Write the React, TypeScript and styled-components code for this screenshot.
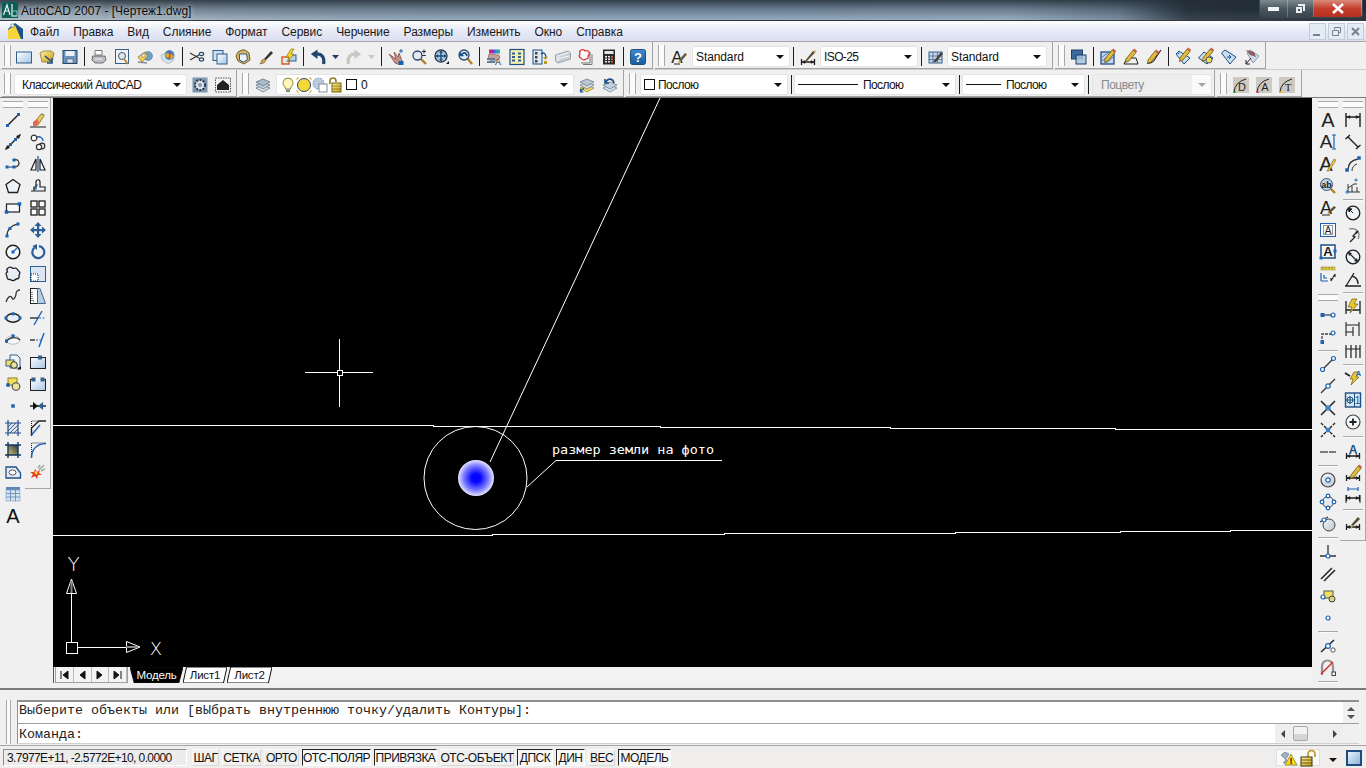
import React from "react";
import styled, { createGlobalStyle } from "styled-components";

const BLUE = "#1b62b4";
const INK = "#1f1f1f";
const UI_FONT = '"Liberation Sans", Arial, sans-serif';

const GlobalStyle = createGlobalStyle`
  html, body { margin: 0; padding: 0; background: #f0f0f0; overflow: hidden; }
  #root { width: 1366px; height: 768px; }
  * { box-sizing: border-box; }
`;

const Frame = styled.div`
  width: 1366px;
  height: 768px;
  display: flex;
  flex-direction: column;
  background: #f0f0f0;
  font-family: ${UI_FONT};
  font-size: 12px;
  color: #111;
`;

/* title bar */
const TitleBar = styled.header`
  height: 21px;
  display: flex;
  align-items: center;
  padding: 0 2px;
  border-bottom: 1px solid #30383f;
  background:
    linear-gradient(180deg, rgba(35, 45, 55, 0.85) 0, rgba(35, 45, 55, 0.35) 45%, rgba(255, 255, 255, 0.08) 100%),
    linear-gradient(90deg, #a9b8c4 0, #8fa5b8 25%, #8aa2bb 50%, #90a6bc 74%, #6f8498 82%, #26323d 87%, #1c2833 100%);
`;

const TitleText = styled.span`
  margin-left: 3px;
  padding-top: 1px;
  font-size: 12px;
  color: #0c0c0c;
  text-shadow: 0 0 5px rgba(255, 255, 255, 0.8);
`;

const WindowButtons = styled.div`
  margin-left: auto;
  margin-right: 1px;
  align-self: flex-start;
  display: flex;
  height: 18px;
  border: 1px solid #3b4650;
  border-top: none;
  border-radius: 0 0 4px 4px;
  overflow: hidden;
`;

const WinButton = styled.div<{ $w: number; $close?: boolean }>`
  width: ${(p) => p.$w}px;
  display: flex;
  align-items: center;
  justify-content: center;
  border-right: 1px solid rgba(255, 255, 255, 0.25);
  background: ${(p) =>
    p.$close
      ? "linear-gradient(180deg, #d98a7a 0, #c4402c 50%, #b52f1e 100%)"
      : "linear-gradient(180deg, #7d8890 0, #4d5962 50%, #39444d 100%)"};
`;

/* menu */
const MenuBar = styled.nav`
  height: 21px;
  display: flex;
  align-items: center;
  padding-left: 8px;
  border-bottom: 1px solid #a8a8a8;
  background: linear-gradient(180deg, #ffffff 0, #e9ebf6 45%, #dadff1 100%);
`;

const MenuList = styled.div`
  display: flex;
  padding-top: 1px;
`;

const MenuItem = styled.span`
  padding: 0 7px;
  font-size: 12px;
  color: #1a1a1a;
  letter-spacing: -0.07px;
`;

const DocIcon = styled.div`
  width: 15px;
  height: 16px;
`;

const MdiButtons = styled.div`
  margin-left: auto;
  margin-right: 2px;
  display: flex;
  gap: 2px;
`;

const MdiButton = styled.div`
  width: 17px;
  height: 17px;
  display: flex;
  align-items: center;
  justify-content: center;
  background: #e3ebf5;
  border: 1px solid #c4ccd8;
`;

/* toolbars */
const ToolRow = styled.div`
  height: 28px;
  display: flex;
  gap: 2px;
  padding-left: 2px;
  border-bottom: 1px solid #cfcfcf;
  &:last-of-type {
    border-bottom-color: #7c7c7c;
  }
`;

const Toolbar = styled.div<{ $w: number }>`
  width: ${(p) => p.$w}px;
  padding-top: 3px;
  display: flex;
  align-items: center;
  border-right: 1px solid #a3a3a3;
  border-bottom: 1px solid #a3a3a3;
  background: #f0f0f0;
`;

const Grip = styled.span<{ $w?: number }>`
  flex: none;
  width: ${(p) => p.$w ?? 12}px;
  height: 100%;
  display: flex;
  justify-content: center;
  padding-bottom: 2px;
  &::before {
    content: "";
    width: 5px;
    border-left: 1px solid #a9a9a9;
    border-right: 1px solid #a9a9a9;
    background: #fbfbfb;
  }
`;

const Cell = styled.span<{ $w?: number; $ml?: number }>`
  flex: none;
  width: ${(p) => p.$w ?? 23}px;
  height: 22px;
  margin-left: ${(p) => p.$ml ?? 0}px;
  display: flex;
  align-items: center;
  padding-left: ${(p) => (p.$w ? 3 : 4)}px;
`;

const Sep = styled.span`
  flex: none;
  width: 6px;
  height: 19px;
  display: flex;
  justify-content: center;
  &::before {
    content: "";
    width: 1px;
    background: #1d1d1d;
  }
`;

const Combo = styled.div<{ $w: number; $ml?: number; $off?: boolean; $gap?: number }>`
  flex: none;
  width: ${(p) => p.$w}px;
  height: 21px;
  margin-left: ${(p) => p.$ml ?? 0}px;
  display: flex;
  align-items: center;
  padding: 0 5px 0 3px;
  gap: ${(p) => p.$gap ?? 3}px;
  background: ${(p) => (p.$off ? "linear-gradient(90deg, #eeeeee 84%, #fafafa 84%)" : "#ffffff")};
  border: 1px solid #e4e4e4;
  border-radius: 2px;
  font-size: 12px;
  color: ${(p) => (p.$off ? "#8b8b8b" : "#111")};
  &::after {
    content: "";
    margin-left: auto;
    border-left: 4px solid transparent;
    border-right: 4px solid transparent;
    border-top: 4px solid ${(p) => (p.$off ? "#a5a5a5" : "#111")};
  }
`;

const Swatch = styled.span`
  flex: none;
  width: 11px;
  height: 11px;
  border: 1px solid #111;
  background: #fff;
`;

const LayerSwatch = styled(Swatch)`
  margin: 0 4px 0 2px;
`;

const LineSample = styled.span<{ $w: number }>`
  flex: none;
  width: ${(p) => p.$w}px;
  height: 1px;
  margin-right: 2px;
  background: #111;
`;

const ComboLabel = styled.span<{ $ml?: number; $ls?: number }>`
  margin-left: ${(p) => p.$ml ?? 0}px;
  letter-spacing: ${(p) => p.$ls ?? -0.1}px;
  white-space: nowrap;
`;

/* workspace */
const Workspace = styled.main`
  height: 585px;
  display: flex;
`;

const Dock = styled.aside<{ $w: number; $pl: number }>`
  flex: none;
  width: ${(p) => p.$w}px;
  padding-left: ${(p) => p.$pl}px;
  display: flex;
  align-items: flex-start;
`;

const ToolColumn = styled.div<{ $w: number; $edge?: boolean; $pb?: number }>`
  width: ${(p) => p.$w}px;
  display: flex;
  flex-direction: column;
  align-items: center;
  padding-bottom: ${(p) => p.$pb ?? 0}px;
  border-right: ${(p) => (p.$edge ? "1px solid #a8a8a8" : "none")};
  border-bottom: ${(p) => (p.$edge ? "1px solid #a8a8a8" : "none")};
`;

const VGrip = styled.span`
  flex: none;
  height: 11px;
  width: 20px;
  padding-top: 3px;
  &::before {
    content: "";
    display: block;
    height: 5px;
    border-top: 1px solid #a9a9a9;
    border-bottom: 1px solid #a9a9a9;
    background: #fbfbfb;
  }
`;

const VBreak = styled.span<{ $h: number; $grip?: boolean }>`
  flex: none;
  width: 20px;
  height: ${(p) => p.$h}px;
  display: flex;
  flex-direction: column;
  justify-content: ${(p) => (p.$grip ? "flex-end" : "center")};
  padding-bottom: ${(p) => (p.$grip ? 3 : 0)}px;
  &::before {
    content: "";
    display: block;
    height: ${(p) => (p.$grip ? 5 : 1)}px;
    border-top: 1px solid #a9a9a9;
    border-bottom: ${(p) => (p.$grip ? "1px solid #a9a9a9" : "none")};
    background: #fbfbfb;
  }
`;

const VCell = styled.span`
  flex: none;
  height: 22px;
  display: flex;
  align-items: center;
  justify-content: center;
`;

const Center = styled.section`
  flex: none;
  width: 1259px;
  display: flex;
  flex-direction: column;
`;

const Canvas = styled.svg`
  display: block;
  width: 1259px;
  height: 569px;
  background: #000;
`;

const TabBar = styled.div`
  height: 16px;
  display: flex;
  align-items: stretch;
  padding-left: 1px;
  background: #f3f3f3;
  border-left: 1px solid #555;
`;

const TabNav = styled.div`
  display: flex;
  width: 73px;
  margin-right: 2px;
  border: 1px solid #a0a0a0;
  border-top: none;
`;

const TabNavCell = styled.span`
  flex: 1;
  display: flex;
  align-items: center;
  justify-content: center;
  border-right: 1px solid #bdbdbd;
  background: #f4f4f4;
`;

const Tab = styled.div<{ $w: number; $on?: boolean }>`
  position: relative;
  width: ${(p) => p.$w}px;
  padding-bottom: 1px;
  display: flex;
  align-items: center;
  justify-content: center;
  font-size: 11.5px;
  letter-spacing: -0.2px;
  color: ${(p) => (p.$on ? "#fff" : "#111")};
  & span {
    position: relative;
  }
  & svg {
    position: absolute;
    inset: 0;
    width: 100%;
    height: 100%;
  }
`;

/* command line */
const CommandPanel = styled.section`
  height: 57px;
  margin-top: 5px;
  padding-top: 10px;
  display: flex;
  border-top: 2px solid #7b7b7b;
`;

const CommandGrip = styled.span`
  flex: none;
  width: 5px;
  margin: 0 6px;
  border-left: 1px solid #a9a9a9;
  border-right: 1px solid #a9a9a9;
  background: #fbfbfb;
  height: 44px;
`;

const CommandBody = styled.div`
  width: 1342px;
  display: flex;
  flex-direction: column;
  font-family: "Liberation Mono", "Courier New", monospace;
  font-size: 13.33px;
  color: #222;
`;

const HistoryRow = styled.div`
  height: 24px;
  display: flex;
  border-top: 2px solid #8f8f8f;
  border-bottom: 1px solid #a0a0a0;
  border-left: 1px solid #8f8f8f;
  background: #fff;
`;

const InputRow = styled.div`
  height: 20px;
  display: flex;
  align-items: center;
  border-left: 1px solid #8f8f8f;
  border-bottom: 1px solid #d0d0d0;
`;

const CommandText = styled.div<{ $pt?: number; $pb?: number }>`
  flex: 1;
  height: 100%;
  padding: ${(p) => p.$pt ?? 0}px 0 ${(p) => p.$pb ?? 0}px 1px;
  display: flex;
  align-items: center;
  background: #fff;
`;

const VScroll = styled.div`
  flex: none;
  width: 16px;
  display: flex;
  flex-direction: column;
  align-items: center;
  justify-content: space-between;
  padding: 5px 0 4px;
  background: #f0f0f0;
`;

const HScroll = styled.div`
  flex: none;
  width: 68px;
  height: 17px;
  margin-right: 16px;
  padding: 0 6px;
  display: flex;
  align-items: center;
  background: #eeeeee;
`;

const Thumb = styled.span`
  width: 15px;
  height: 15px;
  margin-left: 8px;
  margin-right: auto;
  border: 1px solid #a8a8a8;
  border-radius: 2px;
  background: linear-gradient(180deg, #f2f2f2 50%, #d5d5d5 50%);
`;

const TriangleUp = styled.span`
  border-left: 4px solid transparent;
  border-right: 4px solid transparent;
  border-bottom: 4px solid #555;
`;
const TriangleDown = styled.span`
  border-left: 4px solid transparent;
  border-right: 4px solid transparent;
  border-top: 4px solid #555;
`;
const TriangleLeft = styled.span`
  border-top: 4px solid transparent;
  border-bottom: 4px solid transparent;
  border-right: 4px solid #444;
`;
const TriangleRight = styled.span`
  border-top: 4px solid transparent;
  border-bottom: 4px solid transparent;
  border-left: 4px solid #444;
`;

/* status bar */
const StatusBar = styled.footer`
  height: 23px;
  display: flex;
  align-items: flex-start;
  padding: 3px 0 0 3px;
  border-top: 1px solid #a4a4a4;
  background: #f0eded;
`;

const Coords = styled.div`
  flex: none;
  width: 184px;
  height: 17px;
  margin-right: 5px;
  padding: 1px 0 0 3px;
  display: flex;
  align-items: center;
  font-size: 12px;
  letter-spacing: -0.6px;
  white-space: nowrap;
  border: 1px solid;
  border-color: #8f8f8f #fff #fff #8f8f8f;
  background: #ececec;
`;

const StatusButton = styled.div<{ $w: number; $on?: boolean }>`
  flex: none;
  width: ${(p) => p.$w}px;
  height: 17px;
  margin-right: 3px;
  padding-top: 1px;
  display: flex;
  align-items: center;
  justify-content: center;
  font-size: 12px;
  letter-spacing: -0.5px;
  white-space: nowrap;
  background: ${(p) => (p.$on ? "#f7f7f7" : "#f0f0f0")};
  border: 1px solid;
  border-color: ${(p) => (p.$on ? "#222 #fff #fff #222" : "#fbfbfb #d8d8d8 #d8d8d8 #fbfbfb")};
`;

const Tray = styled.div`
  margin-left: auto;
  display: flex;
  align-items: center;
  height: 17px;
  padding-right: 4px;
`;

const TrayIcons = styled.div`
  width: 44px;
  height: 17px;
  padding: 0 3px;
  display: flex;
  align-items: center;
  justify-content: space-between;
  background: #f9f9f9;
  border: 1px solid #e0e0e0;
`;

const TrayArrow = styled.span`
  margin: 4px 9px 0;
  border-left: 4px solid transparent;
  border-right: 4px solid transparent;
  border-top: 4px solid #111;
`;

const CleanScreen = styled.span`
  width: 16px;
  height: 16px;
  border: 2px solid #1e4d7c;
  background: linear-gradient(135deg, #e8f2fa 0, #8db4d8 100%);
`;

/* ---- icons ---- */
const Dot = ({ x, y, s = 3, c = BLUE }: { x: number; y: number; s?: number; c?: string }) => (
  <rect x={x - s / 2} y={y - s / 2} width={s} height={s} fill={c} />
);
const Ring = ({ x, y, r = 1.8 }: { x: number; y: number; r?: number }) => (
  <circle cx={x} cy={y} r={r} fill="#fff" stroke={BLUE} strokeWidth="1.2" />
);
const Glyph = ({ x = 8, y = 14, size = 17, c = INK, t = "A", w = 400 }: { x?: number; y?: number; size?: number; c?: string; t?: string; w?: number }) => (
  <text x={x} y={y} fontSize={size} fontWeight={w} textAnchor="middle" fontFamily={UI_FONT} fill={c}>
    {t}
  </text>
);
const Pencil = ({ x = 0, y = 0, c = "#e2b93a" }: { x?: number; y?: number; c?: string }) => (
  <g transform={`translate(${x} ${y})`}>
    <path d="M4 11 L11 2 L14 4.5 L7 13 L3.5 14.5 Z" fill={c} stroke="#5a4a10" strokeWidth="0.7" />
    <path d="M11 2 L12.2 .6 L15.2 3 L14 4.5 Z" fill="#d0574f" />
  </g>
);
const Lens = ({ x = 6.5, y = 6.5, r = 4.5, fill = "#dfeaf5" }: { x?: number; y?: number; r?: number; fill?: string }) => (
  <g>
    <path d={`M${x + r * 0.7} ${y + r * 0.7} L15 15`} stroke="#b5802c" strokeWidth="2.4" />
    <circle cx={x} cy={y} r={r} fill={fill} stroke="#2d4a6b" strokeWidth="1.3" />
  </g>
);
const DimBar = ({ y = 12 }: { y?: number }) => (
  <g stroke={INK} strokeWidth="1.3">
    <path d={`M1 ${y} H15 M1.5 ${y - 3} V${y + 3} M14.5 ${y - 3} V${y + 3}`} />
    <path d={`M2 ${y} L5 ${y - 1.5} V${y + 1.5} Z M14 ${y} L11 ${y - 1.5} V${y + 1.5} Z`} fill={INK} strokeWidth="0.4" />
  </g>
);

const icons: Record<string, React.ReactNode> = {
  /* standard */
  new: <rect x="0.5" y="3" width="15" height="11" fill="url(#gSheet)" stroke="#2d5f8f" />,
  open: (
    <g>
      <path d="M1 4 L5 2 H12 L15 4 L13 13 H3 Z" fill="url(#gGold)" stroke="#8a7440" strokeWidth="0.8" />
      <path d="M6 7 L13 13 M13 9 V14 H8" stroke="#1c4f86" strokeWidth="1.5" fill="none" />
    </g>
  ),
  save: (
    <g>
      <rect x="1" y="1.5" width="14" height="13" fill="#6d93bd" stroke="#22476f" />
      <rect x="3.5" y="2" width="9" height="5" fill="#e9f0f7" />
      <rect x="5" y="10" width="6" height="4" fill="#e0e4ea" stroke="#22476f" strokeWidth="0.5" />
    </g>
  ),
  plot: (
    <g stroke="#555" strokeWidth="0.8">
      <path d="M4 1.5 H11 V6 H4 Z" fill="#fff" />
      <path d="M1.5 7 H14 L15 11 L12 14 H4 L1 11 Z" fill="#bcbcc4" />
      <path d="M4 10 H11" stroke="#fff" />
    </g>
  ),
  preview: (
    <g>
      <rect x="1.5" y="0.5" width="13" height="14" fill="#eef4fa" stroke="#33608e" />
      <circle cx="8" cy="7" r="3.5" fill="#dbe8f4" stroke="#555" />
      <path d="M10 10 L14 15" stroke="#c08a33" strokeWidth="2" />
    </g>
  ),
  publish: (
    <g>
      <circle cx="11" cy="7" r="4.5" fill="#6f9ecb" stroke="#4a6785" strokeWidth="0.5" />
      <path d="M1 8 L8 3 L11 7 L5 13 Z" fill="#f4d34a" stroke="#7a6a22" strokeWidth="0.7" />
      <rect x="5" y="5" width="3" height="3" fill="#fff" stroke="#555" strokeWidth="0.5" />
      <path d="M1 13 L10 14" stroke="#8a8a8a" strokeWidth="1.4" />
    </g>
  ),
  dwf: (
    <g>
      <path d="M1 6 L8 3 L14 6 V11 L8 15 L2 11 Z" fill="#d6e1ec" stroke="#9aa9b8" strokeWidth="0.6" />
      <circle cx="9.5" cy="6" r="4.8" fill="#3f82c8" />
      <path d="M5 5 Q9 3 14 7 L11 10 Q7 8 6 8 Z" fill="#e7a92c" />
      <path d="M9 1.5 Q11 5 9 10" stroke="#c73f3a" strokeWidth="1.3" fill="none" />
    </g>
  ),
  cut: (
    <g fill="none" stroke="#333" strokeWidth="1.1">
      <path d="M1 4 L10 9 M1 11 L10 6" />
      <ellipse cx="12.5" cy="5" rx="2.2" ry="1.6" stroke="#22476f" />
      <ellipse cx="12.5" cy="10.5" rx="2.2" ry="1.6" stroke="#22476f" />
    </g>
  ),
  copy: (
    <g stroke="#2d5f8f">
      <rect x="1" y="1.5" width="10" height="10" fill="#cfe0f0" />
      <rect x="5" y="5" width="10" height="10" fill="url(#gSheet)" />
    </g>
  ),
  paste: (
    <g>
      <path d="M3 3 L7 1 H10 L14 4 L15 11 L9 15 L3 12 L1 7 Z" fill="#d8b86a" stroke="#6b5a2a" />
      <path d="M4.5 5 H11.5 L12.5 10.5 L8.5 13 L4.5 11 Z" fill="#eef3f8" stroke="#2d5f8f" />
    </g>
  ),
  brush: (
    <g>
      <path d="M6 10 L13 2 L15 4 L8 11 Z" fill="#39342c" />
      <path d="M6 10 L8 11 L6 14 L2 15 L4 11 Z" fill="#e0a23c" stroke="#444" strokeWidth="0.5" />
    </g>
  ),
  match: (
    <g>
      <rect x="1" y="8" width="7" height="7" fill="#e7e7e7" stroke="#d95a24" strokeWidth="1.4" />
      <rect x="8" y="6" width="7" height="6" fill="#b8d0e8" stroke="#2d5f8f" />
      <path d="M10 0 L5 8 H8 L6 13 L13 5 H10 L13 0 Z" fill="#f5d21f" stroke="#7a6a12" strokeWidth="0.6" />
    </g>
  ),
  undo: (
    <g>
      <path d="M13.5 15 C15 8 11 4 6 5" fill="none" stroke="#21466e" strokeWidth="3.2" />
      <path d="M7.5 0.5 V10 L0.8 5 Z" fill="#21466e" />
    </g>
  ),
  redo: (
    <g>
      <path d="M2.5 15 C1 8 5 4 10 5" fill="none" stroke="#c6c6c6" strokeWidth="3.2" />
      <path d="M8.5 0.5 V10 L15.2 5 Z" fill="#c6c6c6" />
    </g>
  ),
  pan: (
    <g>
      <path d="M1 5 L8 10 L6 3 L10 8 L11 4 L13 9 L14.5 13 L11 15.5 L7 14 Z" fill="#c98d86" stroke="#6d4640" strokeWidth="0.7" />
      <path d="M13 0 V4 M11 2 H15" stroke={BLUE} strokeWidth="1" />
      <rect x="10.5" y="12" width="5" height="4" fill={BLUE} />
    </g>
  ),
  zoomrt: (
    <g>
      <Lens />
      <path d="M11 2.5 H15 M13 0.5 V4.5 M11 6.5 H15" stroke="#222" strokeWidth="0.9" />
    </g>
  ),
  zoomwin: (
    <g>
      <circle cx="7" cy="7" r="6" fill="#b8c8d8" stroke="#2d3f52" strokeWidth="1.4" />
      <path d="M7 2.5 V11.5 M2.5 7 H11.5" stroke="#1c4f86" strokeWidth="1.5" />
      <path d="M7 1.5 L9 4 H5 Z M7 12.5 L9 10 H5 Z M1.5 7 L4 5 V9 Z M12.5 7 L10 5 V9 Z" fill="#1c4f86" />
      <path d="M12 15 H15 V12 Z" fill="#111" />
    </g>
  ),
  zoomprev: (
    <g>
      <Lens r={5} x={7} y={6} />
      <path d="M4 6 C6 3 9 3 10 7 M3 3 V6.5 H6.5" fill="none" stroke="#1c4f86" strokeWidth="1.6" />
    </g>
  ),
  props: (
    <g>
      <rect x="3" y="0.5" width="11" height="4" fill="url(#gRainbow)" />
      <path d="M3 5 L13 6 L14 9 L8 13 L2 10 Z" fill="#c9a098" stroke="#6d4640" strokeWidth="0.5" />
      <rect x="1" y="9" width="8" height="2" fill="#5f7f9f" />
      <rect x="1" y="12" width="8" height="2" fill="#5f7f9f" />
      <Glyph x={12} y={15.5} size={9} t="A" />
    </g>
  ),
  dc: (
    <g>
      <rect x="1" y="0.5" width="14" height="15" fill="#f5efb0" stroke="#1c4f86" strokeWidth="1.2" />
      {[3.5, 7, 10.5].map((y) => (
        <g key={y}>
          <rect x="3" y={y} width="3" height="2" fill="#2d5f8f" />
          <rect x="9" y={y} width="3" height="2" fill="#2d5f8f" />
        </g>
      ))}
    </g>
  ),
  palette: (
    <g>
      <rect x="1" y="1" width="9" height="14" fill="#dfeaf5" stroke="#1c4f86" />
      <rect x="3" y="3" width="2.5" height="2.5" fill="#444" />
      <rect x="3" y="7" width="2.5" height="2.5" fill="#444" />
      <rect x="3" y="11" width="2.5" height="2.5" fill="#444" />
      <path d="M9 5 Q13 2 14 8" fill="none" stroke="#1c4f86" strokeWidth="1.4" />
      <path d="M11 8 H16 L13.5 11 Z M12 12 H15 V15 H12 Z" fill="#b89b28" />
    </g>
  ),
  sheet: (
    <g>
      <path d="M0.5 6 L13 2 L15.5 4 V10 L3 14 L0.5 12 Z" fill="#c8ced6" stroke="#9aa2ac" />
      <path d="M2 7 L14 3.5 M2 10 L14 7" stroke="#f5f5f5" strokeWidth="1.2" />
      <ellipse cx="3" cy="9" rx="1.5" ry="3.2" fill="#e4e7eb" />
    </g>
  ),
  markup: (
    <g>
      <path d="M12 3 V14 H3 M14 5 V15.5 H5" stroke="#777" fill="none" />
      <path d="M3 1 Q6 0 7 2 Q10 1 11 3 Q12 6 10 7 Q11 10 8 10 Q5 12 3 9 Q0 8 2 5 Q1 2 3 1 Z" fill="#fff" stroke="#d42c2c" strokeWidth="1.2" />
    </g>
  ),
  calc: (
    <g>
      <rect x="2" y="0.5" width="12" height="15" fill="#2a2a2a" />
      <rect x="3.5" y="2" width="9" height="3" fill="#dce8dc" />
      {[7, 9.5, 12].map((y) =>
        [4, 7, 10].map((x) => <rect key={`${x}-${y}`} x={x} y={y} width="2" height="1.5" fill={x === 10 ? "#e05a3c" : "#e8e8e8"} />)
      )}
    </g>
  ),
  help: (
    <g>
      <rect x="0.5" y="0.5" width="15" height="15" rx="2" fill="url(#gHelp)" stroke="#1d4c7d" />
      <Glyph y={13} size={13} c="#fff" t="?" w={700} />
    </g>
  ),
  /* styles */
  textstyle: (
    <g>
      <Glyph x={6} y={14} size={17} />
      <path d="M3 15 H9" stroke="#222" />
      <path d="M8 11 L14 4 L16 5.5 L10 12.5 Z" fill="#6a5a3a" />
      <path d="M8 11 L10 12.5 L7 15 Z" fill="#d89a3c" />
    </g>
  ),
  dimstyle: (
    <g>
      <DimBar y={13} />
      <path d="M5 12 L13 2 L15 3.5 L7 12 Z" fill="#5b4a34" />
      <path d="M14 1 L16 2 L15 4 Z" fill="#d89a3c" />
    </g>
  ),
  tablestyle: (
    <g>
      <rect x="1" y="3" width="13" height="11" fill="#c5d5ea" stroke="#33608e" />
      <path d="M1 7 H14 M1 10.5 H14 M5 3 V14 M9.5 3 V14" stroke="#33608e" strokeWidth="0.7" />
      <path d="M5 13 L13 3 L15 4.5 L8 13 Z" fill="#4a3f30" />
    </g>
  ),
  draworder: (
    <g>
      <rect x="0.5" y="1" width="11" height="9" fill="#3f6a9e" stroke="#1d3f66" />
      <rect x="5" y="6" width="10" height="9" fill="#a9c3de" fillOpacity="0.85" stroke="#1d3f66" />
    </g>
  ),
  ddedit: (
    <g>
      <rect x="1" y="3" width="13" height="12" fill="#c5d5ea" stroke="#1c4f86" strokeWidth="1.3" />
      <path d="M2 12 L12 4 M2 8 L8 4 M6 14 L13 8" stroke="#1c4f86" strokeWidth="0.7" />
      <Pencil x={1} y={-1} />
    </g>
  ),
  pedit: (
    <g>
      <path d="M1 15 L4 9 H13 L15 15 Z" fill="none" stroke="#222" />
      <Pencil x={-1} y={-1} />
    </g>
  ),
  splinedit: (
    <g>
      <path d="M1 14 Q6 15 9 10 T15 1" fill="none" stroke="#222" strokeWidth="1.2" />
      <Pencil x={-2} y={0} />
    </g>
  ),
  attdef: (
    <g>
      <path d="M1 5 L4 2 L15 9 L9 15 Z" fill="#c9dff0" stroke="#1c4f86" />
      <circle cx="3.5" cy="4.5" r="0.8" fill="#1c4f86" />
      <Pencil x={1} y={-2} />
    </g>
  ),
  attedit: (
    <g>
      <path d="M0.5 9 L6 3 L15 9 L9 15 Z" fill="#c9dff0" stroke="#1c4f86" />
      <Pencil x={1} y={-2} />
      <circle cx="11" cy="11" r="3" fill="#f0dc6a" stroke="#555" />
    </g>
  ),
  attext: (
    <g>
      <path d="M0.5 4 L4 1 L15 8 L9 15 Z" fill="#c9dff0" stroke="#1c4f86" />
      <path d="M6 8 L10 8 M8 6 L10 8 L8 10" stroke="#1c4f86" fill="none" />
    </g>
  ),
  battman: (
    <g>
      <path d="M3 4 L6 1 L15 7 L9 14 Z" fill="#d0dbe8" stroke="#8a97a8" />
      <path d="M2 1 L10 3 L12 8 L6 6 Z" fill="#8c5e60" />
      <path d="M2 15 L7 9 M2 11 V15 H6" stroke="#222" fill="none" />
    </g>
  ),
  /* layer */
  layers: (
    <g stroke="#5f7587" strokeWidth="0.8">
      <path d="M8 8 L15 11 L8 15 L1 11 Z" fill="#dbe3ea" />
      <path d="M8 5 L15 8 L8 12 L1 8 Z" fill="#c5d2dd" />
      <path d="M8 2 L15 5 L8 9 L1 5 Z" fill="#a9bac9" />
    </g>
  ),
  layerprev: (
    <g stroke="#5f7587" strokeWidth="0.7">
      <path d="M8 8 L15 11 L8 15 L1 11 Z" fill="#dbe3ea" />
      <path d="M8 5 L15 8 L8 12 L1 8 Z" fill="#c5d2dd" />
      <path d="M4 5 C6 1 11 1 12 6 M3 2 V6 H7" fill="none" stroke="#1c4f86" strokeWidth="1.6" />
    </g>
  ),
  layermatch: (
    <g stroke="#8f8430" strokeWidth="0.7">
      <path d="M8 8 L15 11 L8 15 L1 11 Z" fill="#f0d95c" />
      <path d="M8 5 L15 8 L8 12 L1 8 Z" fill="#d8dde2" stroke="#5f7587" />
      <path d="M8 2 L15 5 L8 9 L1 5 Z" fill="#b9c7d3" stroke="#5f7587" />
      <path d="M1 15 L5 11 M1.5 12 V15 H4.5" stroke="#1c4f86" strokeWidth="1.1" fill="none" />
    </g>
  ),
  bulb: (
    <g>
      <path d="M8 1 A5 5 0 0 1 11 10 L10.5 12 H5.5 L5 10 A5 5 0 0 1 8 1 Z" fill="#fff8b8" stroke="#8c8346" />
      <rect x="6" y="12.5" width="4" height="2.5" fill="#888" />
    </g>
  ),
  sun: (
    <g>
      <rect x="1" y="1" width="14" height="14" fill="none" stroke="#d7b520" strokeDasharray="2 10 2 0" />
      <circle cx="8" cy="8" r="6.5" fill="#f6d935" stroke="#27407a" />
    </g>
  ),
  freeze: (
    <g>
      <circle cx="6.5" cy="6.5" r="5.5" fill="#b9ccdf" stroke="#7f97ae" strokeDasharray="2 1" />
      <rect x="7" y="7" width="8" height="8" fill="#fff" stroke="#7e8c9a" />
    </g>
  ),
  lock: (
    <g>
      <path d="M2 7 V4 A3 3 0 0 1 8 4 V5" fill="none" stroke="#8c7c18" strokeWidth="1.6" />
      <rect x="4" y="6" width="9" height="9" fill="url(#gGold)" stroke="#6e6214" />
      <path d="M4 9 H13 M4 12 H13" stroke="#6e6214" strokeWidth="0.6" />
    </g>
  ),
  /* workspace */
  gear: (
    <g>
      <rect x="0.5" y="0.5" width="15" height="15" fill="#7f97b0" />
      <circle cx="8" cy="8" r="5" fill="#e1e6ea" stroke="#28384a" strokeWidth="2" strokeDasharray="2 1.2" />
      <circle cx="8" cy="8" r="2" fill="#7f97b0" />
    </g>
  ),
  lockhouse: (
    <g>
      <rect x="0.5" y="1" width="15" height="14" fill="#f2f2f2" stroke="#555" strokeDasharray="1.5 1" />
      <path d="M8 3 L14 8 V13 H2 V8 Z" fill="#222" />
    </g>
  ),
  annoD: (
    <g>
      <rect x="0" y="0" width="16" height="16" fill="#cfcac1" />
      <path d="M1 15 Q2 5 13 2" fill="none" stroke="#222" />
      <Dot x={1.5} y={15} s={2} c="#1c9a3c" />
      <Glyph x={9} y={13.5} size={11} t="D" />
    </g>
  ),
  annoA: (
    <g>
      <rect x="0" y="0" width="16" height="16" fill="#cfcac1" />
      <path d="M1 15 Q2 5 13 2" fill="none" stroke="#222" />
      <Dot x={1.5} y={15} s={2} c="#d42c2c" />
      <Glyph x={9} y={13.5} size={11} t="A" />
    </g>
  ),
  annoT: (
    <g>
      <rect x="0" y="0" width="16" height="16" fill="#cfcac1" />
      <path d="M1 15 Q2 5 13 2" fill="none" stroke="#222" />
      <Dot x={1.5} y={15} s={2} c="#d7b520" />
      <text x="9" y="13.5" fontSize="11" textAnchor="middle" fontFamily='"Liberation Serif", serif' fill={INK}>
        T
      </text>
    </g>
  ),
  /* draw */
  line: (
    <g>
      <path d="M2 14 L14 2" stroke={INK} strokeWidth="1.4" />
      <Dot x={2.5} y={13.5} />
      <Dot x={13.5} y={2.5} />
    </g>
  ),
  xline: (
    <g>
      <path d="M0.5 15.5 L15.5 0.5" stroke={INK} strokeWidth="1.4" />
      <path d="M15.5 0.5 L11 2 L14 5 Z M0.5 15.5 L5 14 L2 11 Z" fill={INK} />
      <Dot x={5.5} y={10.5} />
      <Dot x={10.5} y={5.5} />
    </g>
  ),
  pline: (
    <g>
      <path d="M2 11 H9 C14 11 15 7 13 4.5 C12 3.5 10 3.5 9 4" fill="none" stroke="#333" strokeWidth="1.2" />
      <Dot x={2} y={11} />
      <Dot x={9} y={11} />
      <Dot x={9} y={4} />
    </g>
  ),
  polygon: <path d="M8 1.5 L15 6.5 L12.5 14.5 H3.5 L1 6.5 Z" fill="#eef3f8" stroke={INK} strokeWidth="1.3" />,
  rect: (
    <g>
      <rect x="1.5" y="4" width="13" height="8" fill="#f6f9fc" stroke={INK} strokeWidth="1.2" />
      <Dot x={1.5} y={12} s={3.5} />
      <Dot x={14.5} y={4} s={3.5} />
    </g>
  ),
  arc: (
    <g>
      <path d="M2 14 C2 7 7 3 13 2" fill="none" stroke="#333" strokeWidth="1.3" />
      <Dot x={2} y={14} />
      <Dot x={5} y={6.5} />
      <Dot x={13} y={2} />
    </g>
  ),
  circle: (
    <g>
      <circle cx="8" cy="8" r="6.8" fill="#f6f9fc" stroke={INK} strokeWidth="1.5" />
      <path d="M8 8 L12 4" stroke={BLUE} strokeWidth="1.2" />
      <Dot x={8} y={8} />
    </g>
  ),
  cloud: (
    <path
      d="M3 2 Q6 0 8 2.5 Q12 1 13 4.5 Q16 6 14 9 Q15 13 11 13 Q8 16 5.5 13.5 Q2 14 2 10.5 Q0 7 2.5 6 Q1 3 3 2 Z"
      fill="#e7eef5"
      stroke={INK}
      strokeWidth="1.3"
    />
  ),
  spline: <path d="M1 14 C3 8 6 7 7 10 C8 13 11 9 11 6 C11 3 13 2 15 2" fill="none" stroke="#333" strokeWidth="1.3" />,
  ellipse: (
    <g>
      <ellipse cx="8" cy="8" rx="7" ry="4.2" fill="#e7eef5" stroke={INK} strokeWidth="1.5" />
      <Dot x={8} y={3.8} />
      <Dot x={1} y={8} />
      <Dot x={15} y={8} />
    </g>
  ),
  ellarc: (
    <g>
      <ellipse cx="8" cy="8" rx="7" ry="4.2" fill="#f6f9fc" stroke="#b7bfc7" />
      <path d="M2 11 A7 4.2 0 0 1 15 8" fill="none" stroke="#333" strokeWidth="1.4" />
      <Dot x={1.5} y={9} />
      <Dot x={8} y={3.8} />
    </g>
  ),
  insert: (
    <g>
      <path d="M5 1 H12 L15 4 V14 H5 Z" fill="#eef4fa" stroke="#33608e" />
      <rect x="1" y="6" width="8" height="6" fill="#f2e05c" stroke="#33608e" />
      <circle cx="9" cy="11" r="3.3" fill="#e9e3a0" stroke="#333" />
      <path d="M12 15.5 H16 V12 Z" fill="#111" />
    </g>
  ),
  block: (
    <g>
      <rect x="3" y="2" width="9" height="7" fill="#f2e05c" stroke="#8c7c18" />
      <circle cx="11" cy="10.5" r="3.8" fill="#e9e3a0" stroke="#444" strokeWidth="1.1" />
      <Dot x={3} y={9} s={3.5} />
    </g>
  ),
  point: <Dot x={8} y={8} s={3.5} />,
  hatch: (
    <g>
      <rect x="3" y="3" width="10" height="10" fill="#dbe4ee" />
      <path d="M3 7 L7 3 M3 11 L11 3 M5 13 L13 5 M9 13 L13 9" stroke="#22476f" strokeWidth="0.8" />
      <path d="M3 0 V16 M13 0 V16 M0 3 H16 M0 13 H16" stroke="#1c4f86" strokeWidth="1.2" />
    </g>
  ),
  gradient: (
    <g>
      <rect x="3" y="3" width="10" height="10" fill="url(#gGrad)" />
      <path d="M3 0 V16 M13 0 V16 M0 3 H16 M0 13 H16" stroke="#13365c" strokeWidth="1.4" />
    </g>
  ),
  region: (
    <g>
      <path d="M1 3 H11 L15.5 9 V14 H1 Z" fill="#e4edf6" stroke="#1c4f86" strokeWidth="1.3" />
      <ellipse cx="7.5" cy="8.5" rx="3.5" ry="2.6" fill="#fff" stroke="#555" />
    </g>
  ),
  table: (
    <g>
      <rect x="1" y="1" width="14" height="3" fill="#5e86b4" />
      <rect x="1" y="4" width="14" height="11" fill="#d5e2f0" stroke="#7fa0c4" strokeWidth="0.6" />
      <path d="M1 7.5 H15 M1 11 H15 M5.5 4 V15 M10.5 4 V15" stroke="#5e86b4" strokeWidth="0.8" />
    </g>
  ),
  mtext: <Glyph y={15} size={20} c="#111" />,
  /* modify */
  erase: (
    <g>
      <path d="M4 11 L11 2 L14 4 L8 13 L4 13 Z" fill="#e8cb4f" stroke="#6d5e1d" strokeWidth="0.7" />
      <path d="M3 10 L7 7 L9 10 L6 14 L3 14 Z" fill="#e46a58" />
      <path d="M11 2 L12 1 L15 3 L14 4 Z" fill="#999" />
      <path d="M0 15 H16" stroke={INK} />
    </g>
  ),
  copyobj: (
    <g fill="#fff" stroke="#333" strokeWidth="1.2">
      <circle cx="4" cy="4" r="2.8" />
      <circle cx="12" cy="12" r="2.8" fill="#dbe6f0" />
      <circle cx="9" cy="13" r="2.6" />
      <path d="M7 3 C10 2 13 4 13 7" fill="none" stroke={BLUE} strokeWidth="1.4" />
    </g>
  ),
  mirror: (
    <g stroke={INK} strokeWidth="1.2" fill="#fff">
      <path d="M8 0 V16" stroke="#1c4f86" />
      <path d="M6 3 V14 H1 Z" />
      <path d="M10 3 V14 H15 Z" />
    </g>
  ),
  offset: (
    <g fill="none" stroke={INK} strokeWidth="1.2">
      <path d="M1 13 H4 V9 H6 V4 C6 1 10 1 10 4 V9 H15 V13 Z" fill="#eef3f8" />
      <path d="M3 11 H6 V7 H8" stroke="#1c4f86" />
    </g>
  ),
  array: (
    <g fill="#f6f9fc" stroke={INK} strokeWidth="1.3">
      <rect x="1" y="1" width="6" height="6" />
      <rect x="9" y="1" width="6" height="6" />
      <rect x="1" y="9" width="6" height="6" />
      <rect x="9" y="9" width="6" height="6" />
    </g>
  ),
  move: (
    <g fill="#2b5f97">
      <rect x="7" y="3" width="2.2" height="10" />
      <rect x="3" y="7" width="10" height="2.2" />
      <path d="M8 0 L11.5 4 H4.5 Z M8 16 L11.5 12 H4.5 Z M0 8 L4 4.5 V11.5 Z M16 8 L12 4.5 V11.5 Z" />
    </g>
  ),
  rotate: (
    <g>
      <path d="M4.5 3.5 A6 6 0 1 0 9 2.2" fill="none" stroke="#2b5f97" strokeWidth="2.2" />
      <path d="M7 0 V6 L2.5 2 Z" fill="#2b5f97" />
    </g>
  ),
  scale: (
    <g>
      <rect x="0.5" y="0.5" width="15" height="15" fill="#dbe6f2" stroke="#2b5f97" />
      <rect x="1" y="8" width="7" height="7" fill="#fff" stroke="#222" strokeDasharray="1 1" />
    </g>
  ),
  stretch: (
    <g>
      <rect x="0.5" y="0.5" width="7" height="15" fill="#fff" stroke="#222" />
      <path d="M7.5 0.5 H10 L15.5 15.5 H7.5 Z" fill="#b7cde3" stroke="#4a6785" />
      <path d="M2 4 V13 H5" stroke="#222" strokeDasharray="1 1" fill="none" />
    </g>
  ),
  trim: (
    <g>
      <path d="M4 15 L12 1" stroke={BLUE} strokeWidth="1.4" />
      <path d="M0 8 H8" stroke={INK} strokeWidth="1.3" />
      <path d="M9 8 H16" stroke={BLUE} strokeDasharray="2 1.5" />
    </g>
  ),
  extend: (
    <g>
      <path d="M9 15 L14 1" stroke={BLUE} strokeWidth="1.4" />
      <path d="M0 8 H5" stroke={INK} strokeWidth="1.3" />
      <path d="M6 8 H12" stroke={BLUE} strokeDasharray="2 1.5" />
    </g>
  ),
  breakat: (
    <g>
      <rect x="0.5" y="3.5" width="15" height="11" fill="url(#gSheet)" stroke="#222" />
      <Dot x={10} y={3.5} s={4} c="#33608e" />
    </g>
  ),
  breakobj: (
    <g>
      <rect x="0.5" y="3.5" width="15" height="11" fill="url(#gSheet)" stroke="#222" />
      <rect x="3" y="2" width="10" height="3" fill="#f0f0f0" />
      <Dot x={3.5} y={3.5} s={4} c="#33608e" />
      <Dot x={12.5} y={3.5} s={4} c="#33608e" />
    </g>
  ),
  join: (
    <g>
      <path d="M0 8 H16" stroke="#111" strokeWidth="1.4" />
      <path d="M3 4 L8 8 L3 12 Z" fill="#111" />
      <path d="M13 4 L8 8 L13 12 Z" fill="#2b5f97" />
    </g>
  ),
  chamfer: (
    <g>
      <path d="M1.5 16 V8 L9 1 H16" fill="none" stroke={INK} strokeWidth="1.4" />
      <path d="M1.5 8 V1 H9" fill="none" stroke={INK} strokeDasharray="1 1" />
      <path d="M1.5 15 L10 5" stroke={BLUE} strokeWidth="1.4" />
    </g>
  ),
  fillet: (
    <g>
      <path d="M1.5 16 V1 H16" fill="none" stroke={INK} strokeDasharray="1 1" />
      <path d="M1.5 16 C1.5 8 6 2 16 1.5" fill="none" stroke={BLUE} strokeWidth="1.6" />
    </g>
  ),
  explode: (
    <g>
      <path d="M5 5 L7 8 L10 6 L9 9 L12 11 L8 11 L7 15 L5 12 L1 14 L3 10 L0 8 L4 8 Z" fill="#e23a1e" />
      <path d="M4 8 L6 7 L8 9 L6 11 Z" fill="#f6d935" />
      <path d="M9 6 L14 1 M11 7 L15 5 M8 4 L10 1" stroke="#a8a8a8" strokeWidth="1.6" />
    </g>
  ),
  /* text */
  dtext: <Glyph y={15} size={20} c="#222" />,
  mtextI: (
    <g>
      <Glyph x={6} y={14} size={19} c="#222" />
      <path d="M12 1 H16 M14 1 V15 M12 15 H16" stroke={BLUE} strokeWidth="1.2" />
    </g>
  ),
  ddeditA: (
    <g>
      <Glyph x={6} y={15} size={20} c="#222" />
      <path d="M7 15 L14 3 L16 4 L9 15 Z" fill="#e8cb4f" stroke="#6d5e1d" strokeWidth="0.6" />
    </g>
  ),
  spell: (
    <g>
      <path d="M10 10 L15 15" stroke="#b5802c" strokeWidth="2.4" />
      <circle cx="6.5" cy="6.5" r="6" fill="#bcd2e8" stroke="#38597c" />
      <Glyph x={6.5} y={9.5} size={9} t="ab" w={700} />
    </g>
  ),
  astyle: (
    <g>
      <Glyph x={6} y={14} size={18} c="#222" />
      <path d="M2 15 H10" stroke="#222" />
      <path d="M8 12 L14 6 L16 7.5 L10 13 Z" fill="#5b4a34" />
      <path d="M8 12 L10 13 L7 15.5 Z" fill="#d89a3c" />
    </g>
  ),
  scaletext: (
    <g>
      <rect x="0.5" y="1.5" width="15" height="13" fill="#f6f9fc" stroke={BLUE} />
      <rect x="3.5" y="3.5" width="9" height="9" fill="none" stroke="#333" strokeDasharray="1 1" />
      <Glyph y={12} size={10} />
    </g>
  ),
  justify: (
    <g>
      <rect x="1" y="1" width="14" height="13" fill="#f6f9fc" stroke="#1c4f86" strokeWidth="1.5" />
      <Glyph y={12} size={13} w={700} />
      <Dot x={1} y={14} />
      <Dot x={15} y={7} />
    </g>
  ),
  convert: (
    <g>
      <rect x="1" y="1" width="14" height="3" fill="#e8d34a" stroke="#8c7c18" strokeWidth="0.5" />
      <path d="M3 1 V3 M6 1 V3 M9 1 V3 M12 1 V3" stroke="#6b5f14" strokeWidth="0.6" />
      <path d="M1 15 V7 M1 15 H8 M4 9 V12 H7" stroke={BLUE} strokeWidth="1.2" fill="none" />
      <path d="M11 15 L15 8 M15 8 V11 M11 15 V12" stroke="#222" strokeWidth="1.1" fill="none" />
    </g>
  ),
  /* snaps */
  tracking: (
    <g>
      <path d="M2 8 H13" stroke="#444" strokeWidth="1.3" />
      <rect x="0.5" y="6" width="4" height="4" fill={BLUE} />
      <Ring x={13} y={8} r={2} />
    </g>
  ),
  from: (
    <g>
      <path d="M2 14 V5 H13" fill="none" stroke="#444" strokeWidth="1.3" strokeDasharray="3 1" />
      <rect x="0.5" y="11" width="3.5" height="4" fill={BLUE} />
      <Ring x={13} y={4} r={2} />
    </g>
  ),
  endpoint: (
    <g>
      <path d="M3 13 L13 3" stroke="#333" strokeWidth="1.3" />
      <Ring x={2.5} y={13.5} r={2} />
      <Ring x={13.5} y={2.5} r={2} />
    </g>
  ),
  midpoint: (
    <g>
      <path d="M1 15 L15 1" stroke="#333" strokeWidth="1.3" />
      <Ring x={8} y={8} r={2.2} />
    </g>
  ),
  intersect: (
    <g>
      <path d="M1 1 L15 15 M15 1 L1 15" stroke="#222" strokeWidth="1.5" />
      <Dot x={8} y={8} s={5} c="#3d82c8" />
    </g>
  ),
  apparent: (
    <g>
      <path d="M1 1 L15 15 M15 1 L1 15" stroke="#222" strokeWidth="1.4" strokeDasharray="3 1.3" />
      <Dot x={8} y={8} s={4.5} c="#3d82c8" />
    </g>
  ),
  extension: <path d="M0 8 H8 M9 8 H16" stroke="#555" strokeWidth="1.4" strokeDasharray="8 1.5 2 1.5 2 1.5" />,
  center: (
    <g>
      <circle cx="8" cy="8" r="7" fill="url(#gGrey)" stroke="#444" strokeWidth="1.2" />
      <Ring x={8} y={8} r={2.2} />
    </g>
  ),
  quadrant: (
    <g>
      <circle cx="8" cy="8" r="5.5" fill="#e4ebf2" stroke="#444" />
      <Ring x={8} y={2} r={1.8} />
      <Ring x={8} y={14} r={1.8} />
      <Ring x={2} y={8} r={1.8} />
      <Ring x={14} y={8} r={1.8} />
    </g>
  ),
  tangent: (
    <g>
      <circle cx="9" cy="9" r="6" fill="url(#gGrey)" stroke="#444" />
      <path d="M0 6 L8 1" stroke="#333" strokeWidth="1.2" />
      <Ring x={4} y={4} r={2} />
    </g>
  ),
  perp: (
    <g>
      <path d="M0 12 H16 M8 1 V12" stroke="#333" strokeWidth="1.3" />
      <Ring x={8} y={12} r={2} />
    </g>
  ),
  parallel: <path d="M1 13 L12 2 M4 15 L15 4" stroke="#222" strokeWidth="1.5" />,
  snapinsert: (
    <g>
      <rect x="4" y="3" width="9" height="7" fill="#f2e05c" stroke="#555" />
      <circle cx="12" cy="11" r="3" fill="#d8d28a" stroke="#444" />
      <Ring x={3} y={9} r={2} />
    </g>
  ),
  node: <Ring x={8} y={8} r={2} />,
  nearest: (
    <g>
      <path d="M1 14 L14 2" stroke="#222" strokeWidth="1.4" />
      <Ring x={8} y={8} r={2.4} />
      <circle cx="13" cy="12" r="2.2" fill="#fff" stroke="#555" />
    </g>
  ),
  none: (
    <g>
      <path d="M2 15 V6 A5 5 0 0 1 13 6 V15" fill="none" stroke="#9a8f8f" strokeWidth="2.2" />
      <path d="M1 14 L13 2" stroke="#d42c2c" strokeWidth="1.5" />
      <rect x="12" y="12" width="3.5" height="3.5" fill="#fff" stroke="#444" />
    </g>
  ),
  /* dimension */
  dimlinear: (
    <g stroke={INK} strokeWidth="1.4">
      <path d="M1 1 V15 M15 1 V15 M1 5 H15" />
      <path d="M2 5 L5 3.5 V6.5 Z M14 5 L11 3.5 V6.5 Z" fill={INK} strokeWidth="0.4" />
    </g>
  ),
  dimaligned: (
    <g stroke={INK} strokeWidth="1.4" fill="none">
      <path d="M0.5 5 L5 1 M11 15 L15.5 11 M3 3 L13 13" />
    </g>
  ),
  dimarc: (
    <g>
      <path d="M3 14 C3 8 7 4 13 3" fill="none" stroke="#333" strokeWidth="1.3" />
      <path d="M7 15 C7 11 9 9 12 8" fill="none" stroke="#333" />
      <Dot x={2} y={14} s={3.5} />
      <Dot x={14} y={2} s={3.5} />
    </g>
  ),
  dimord: (
    <g stroke="#333" fill="none">
      <path d="M3 14 H15 M3 14 V6 M3 10 L9 6 M9 6 H12 M7 14 V8 M12 14 V9" />
      <circle cx="2.2" cy="14" r="1.2" stroke={BLUE} />
      <circle cx="11" cy="2" r="1" stroke={BLUE} />
    </g>
  ),
  dimradius: (
    <g>
      <circle cx="8" cy="8" r="6.8" fill="#eef3f8" stroke={INK} strokeWidth="1.3" />
      <path d="M8 8 L3.5 3.5 M3.5 3.5 L7 4 L4 7 Z" stroke={INK} fill={INK} strokeWidth="1" />
    </g>
  ),
  dimjog: (
    <g>
      <path d="M4 2 C12 0 16 6 13 12" fill="none" stroke="#777" strokeWidth="1.2" />
      <path d="M13 4 L8 9 L10 10 L5 15" stroke={INK} fill="none" strokeWidth="1.3" />
      <path d="M13 4 L10 5 L12 7 Z" fill={INK} />
    </g>
  ),
  dimdia: (
    <g>
      <circle cx="8" cy="8" r="6.8" fill="#eef3f8" stroke={INK} strokeWidth="1.3" />
      <path d="M3.5 3.5 L12.5 12.5" stroke={INK} strokeWidth="1.2" />
      <path d="M3 3 L7 4 L4 7 Z M13 13 L9 12 L12 9 Z" fill={INK} />
    </g>
  ),
  dimang: (
    <g stroke={INK} fill="none" strokeWidth="1.3">
      <path d="M0 15 H16 M1 15 L9 2" />
      <path d="M7 5 C11 6 13 9 13 13" />
    </g>
  ),
  qdim: (
    <g>
      <path d="M1 2 V15 M15 2 V15 M1 11 H15" stroke={INK} strokeWidth="1.3" />
      <path d="M7 0 L3 8 H7 L5 14 L13 5 H9 L12 0 Z" fill="#e8c828" stroke="#54480f" strokeWidth="0.6" />
    </g>
  ),
  dimbase: (
    <g stroke={INK} strokeWidth="1.1" fill="none">
      <path d="M1 1 V15 M8 6 V15 M14 1 V15 M1 4 H14 M1 11 H8" />
    </g>
  ),
  dimcont: (
    <g stroke={INK} strokeWidth="1.2" fill="none">
      <path d="M1 2 V15 M6 2 V15 M11 2 V15 M15 2 V15 M1 6 H15" />
    </g>
  ),
  leader: (
    <g>
      <path d="M7 0 L3 7 H6 L4 13 L12 5 H9 L11 0 Z" fill="#e8c828" stroke="#54480f" strokeWidth="0.6" transform="translate(2 2)" />
      <path d="M0 3 L5 6" stroke={INK} strokeWidth="1.6" />
      <Glyph x={13.5} y={6} size={7} c={BLUE} w={700} />
    </g>
  ),
  tolerance: (
    <g>
      <rect x="0.5" y="1" width="15" height="14" fill="#dbe6f2" stroke="#1c4f86" strokeWidth="1.4" />
      <circle cx="5" cy="8" r="3" fill="none" stroke="#1c4f86" />
      <path d="M5 4 V12 M1 8 H9 M9.5 1 V15" stroke="#1c4f86" />
      <Glyph x={12.5} y={12} size={10} c="#1c4f86" t="1" />
    </g>
  ),
  centermark: (
    <g>
      <circle cx="8" cy="8" r="7" fill="#f6f9fc" stroke="#444" strokeWidth="1.2" />
      <path d="M4.5 8 H11.5 M8 4.5 V11.5" stroke={INK} strokeWidth="1.8" />
    </g>
  ),
  dimedit: (
    <g>
      <Glyph x={8} y={9.5} size={12} c="#1c4f86" w={700} />
      <DimBar y={12} />
    </g>
  ),
  dimtedit: (
    <g>
      <DimBar y={12} />
      <Pencil x={2} y={-2} />
    </g>
  ),
  dimupdate: (
    <g>
      <path d="M3 1 H13 M3 -1 V3 M13 -1 V3" stroke={BLUE} strokeWidth="1.2" />
      <DimBar y={10} />
      <path d="M1 15 V7 M15 15 V7" stroke={INK} />
    </g>
  ),
  dimbrush: (
    <g>
      <DimBar y={12} />
      <path d="M6 10 L13 2 L15 4 L8 11 Z" fill="#5b4a34" />
      <path d="M6 10 L8 11 L6 14 Z" fill="#d89a3c" />
    </g>
  ),
  warn: (
    <g>
      <path d="M5 2 L1 5 L6 10 L3 13 H8 L6 9 L9 4 Z" fill="#9fb2c5" stroke="#5f7587" strokeWidth="0.6" />
      <path d="M11 4 L17 15 H5 Z" fill="#f7dc1e" stroke="#6e6214" strokeWidth="0.6" />
      <text x="11" y="14" fontSize="9" fontWeight="700" textAnchor="middle" fontFamily={UI_FONT} fill="#111">
        !
      </text>
    </g>
  ),
  padlock: (
    <g>
      <path d="M8 7 V4 A3.5 3.5 0 0 1 15 4 V7" fill="none" stroke="#b8951a" strokeWidth="1.6" />
      <rect x="1" y="7" width="11" height="9" fill="url(#gGold)" stroke="#3a3308" />
      <path d="M1 10 H12 M1 13 H12" stroke="#3a3308" strokeWidth="0.7" />
    </g>
  ),
};

const Icon = ({ name, size = 16 }: { name: string; size?: number }) => (
  <svg width={size} height={size} viewBox="0 0 16 16" overflow="visible" aria-hidden="true">
    {icons[name]}
  </svg>
);

const FlexIcon = styled.span`
  flex: none;
  width: 16px;
  height: 16px;
  display: block;
`;

const Defs = styled.svg`
  display: block;
  width: 0;
  height: 0;
`;

const SharedDefs = () => (
  <Defs aria-hidden="true">
    <defs>
      <linearGradient id="gSheet" x1="0" y1="0" x2="1" y2="1">
        <stop offset="0" stopColor="#ffffff" />
        <stop offset="1" stopColor="#a3c4e4" />
      </linearGradient>
      <linearGradient id="gGold" x1="0" y1="0" x2="1" y2="1">
        <stop offset="0" stopColor="#fff19c" />
        <stop offset="1" stopColor="#c49a14" />
      </linearGradient>
      <linearGradient id="gHelp" x1="0" y1="0" x2="0" y2="1">
        <stop offset="0" stopColor="#3f8bd0" />
        <stop offset="1" stopColor="#1b5b99" />
      </linearGradient>
      <linearGradient id="gGrad" x1="1" y1="0" x2="0" y2="1">
        <stop offset="0" stopColor="#23314a" />
        <stop offset="1" stopColor="#d8c66a" />
      </linearGradient>
      <linearGradient id="gGrey" x1="0" y1="0" x2="1" y2="1">
        <stop offset="0" stopColor="#f8f8f8" />
        <stop offset="1" stopColor="#b9c4cf" />
      </linearGradient>
      <linearGradient id="gRainbow" x1="0" y1="0" x2="1" y2="0">
        <stop offset="0" stopColor="#e0284a" />
        <stop offset="0.35" stopColor="#8e2bd0" />
        <stop offset="0.65" stopColor="#2a8ce0" />
        <stop offset="1" stopColor="#2bc44a" />
      </linearGradient>
    </defs>
  </Defs>
);

/* ---- data ---- */
const MENU = ["Файл", "Правка", "Вид", "Слияние", "Формат", "Сервис", "Черчение", "Размеры", "Изменить", "Окно", "Справка"];

const IconCells = ({ names }: { names: string[] }) => (
  <>
    {names.map((n) => (
      <Cell key={n}>
        <Icon name={n} />
      </Cell>
    ))}
  </>
);

const ColumnCells = ({ names }: { names: string[] }) => (
  <>
    {names.map((n) => (
      <VCell key={n}>
        <Icon name={n} />
      </VCell>
    ))}
  </>
);

const DROP = (
  <Cell $w={13}>
    <svg width="7" height="4" viewBox="0 0 7 4" aria-hidden="true">
      <path d="M0 0 H7 L3.5 4 Z" fill="#1c3d66" />
    </svg>
  </Cell>
);
const DROP_OFF = (
  <Cell $w={13}>
    <svg width="7" height="4" viewBox="0 0 7 4" aria-hidden="true">
      <path d="M0 0 H7 L3.5 4 Z" fill="#c6c6c6" />
    </svg>
  </Cell>
);

const NAV = ["M2 1 V9 M9 1 L4 5 L9 9 Z", "M8 1 L3 5 L8 9 Z", "M3 1 L8 5 L3 9 Z", "M9 1 V9 M2 1 L7 5 L2 9 Z"];

const STATUS: [string, number, boolean][] = [
  ["ШАГ", 27, false],
  ["СЕТКА", 39, false],
  ["ОРТО", 35, false],
  ["ОТС-ПОЛЯР", 69, true],
  ["ПРИВЯЗКА", 63, true],
  ["ОТС-ОБЪЕКТ", 74, false],
  ["ДПСК", 36, true],
  ["ДИН", 29, true],
  ["ВЕС", 27, false],
  ["МОДЕЛЬ", 53, true],
];

const CadLogo = () => (
  <svg width="16" height="16" viewBox="0 0 16 16" aria-hidden="true">
    <rect width="16" height="16" fill="#0d5c55" />
    <path d="M1.5 13 L5 3 L8 13 M3 9 H7" stroke="#e8f4f2" strokeWidth="1.2" fill="none" />
    <path d="M10 2 V14 H15" stroke="#e8f4f2" strokeWidth="1.2" fill="none" />
    <rect x="10" y="9" width="5" height="5" fill="none" stroke="#7fd0c0" />
  </svg>
);

const CadDoc = () => (
  <svg width="15" height="16" viewBox="0 0 15 16" aria-hidden="true">
    <path d="M0 6 L7 0 L15 6 V16 H0 Z" fill="#1d4f8a" />
    <path d="M0 7 L7 2 L13 16 H0 Z" fill="#f5d53a" />
    <rect x="3" y="1" width="3" height="3" fill="#fff" stroke="#1d4f8a" strokeWidth="0.5" />
  </svg>
);

const Drawing = () => (
  <Canvas viewBox="53 98 1259 569" shapeRendering="crispEdges">
    <defs>
      <radialGradient id="gPlanet">
        <stop offset="0" stopColor="#0000ff" />
        <stop offset="0.25" stopColor="#0808ff" />
        <stop offset="0.7" stopColor="#8080ff" />
        <stop offset="1" stopColor="#e6e6ff" />
      </radialGradient>
    </defs>
    <g stroke="#fff" fill="none" strokeWidth="1">
      {/* crosshair */}
      <path d="M305 372.5 H373 M339.5 339 V407" />
      <rect x="337.5" y="370.5" width="5" height="5" fill="#000" />
      {/* ground lines */}
      <path d="M53 425.5 H433 V426.5 H660 V427.5 H890 V428.5 H1115 V429.5 H1312" />
      <path d="M53 535.5 H492 V534.5 H724 V533.5 H955 V532.5 H1120 V531.5 H1230 V530.5 H1312" />
    </g>
    <g stroke="#fff" fill="none" strokeWidth="1" shapeRendering="auto">
      <path d="M660 98 L490 462" />
      <circle cx="475.5" cy="478" r="51.5" />
      <path d="M527 487 L556 460.5 H722" />
      <circle cx="476" cy="478" r="18" fill="url(#gPlanet)" stroke="none" />
      {/* UCS icon */}
      <rect x="66.5" y="642.5" width="11" height="11" />
      <path d="M71.5 642 V593 M77.5 647.5 H126" />
      <path d="M66.5 593.5 H76.5 L71.5 579 Z M126.5 641.5 V652.5 L140 647 Z" />
      <path d="M71.5 593 V581 M126 647 H138" stroke="#888" strokeWidth="2" />
    </g>
    <text x="552" y="454" fontFamily='"DejaVu Sans Mono", monospace' fontSize="12" fill="#fff" textLength="162" lengthAdjust="spacingAndGlyphs">
      размер земли на фото
    </text>
    <text x="73.5" y="571" fontFamily='"DejaVu Sans", sans-serif' fontWeight="200" fontSize="20" textAnchor="middle" fill="#fff">
      Y
    </text>
    <text x="156" y="655" fontFamily='"DejaVu Sans", sans-serif' fontWeight="200" fontSize="18" textAnchor="middle" fill="#fff">
      X
    </text>
  </Canvas>
);

const TabShape = ({ on }: { on?: boolean }) => (
  <svg viewBox="0 0 100 16" preserveAspectRatio="none" aria-hidden="true">
    <path
      d={on ? "M0 0 H100 L92 16 H8 Z" : "M8 0 H100 L92 16 H0 Z"}
      fill={on ? "#000" : "#fff"}
      stroke="#111"
      strokeWidth="1"
      vectorEffect="non-scaling-stroke"
    />
  </svg>
);

export default function App() {
  return (
    <Frame>
      <GlobalStyle />
      <TitleBar>
        <CadLogo />
        <TitleText>AutoCAD 2007 - [Чертеж1.dwg]</TitleText>
        <WindowButtons>
          <WinButton $w={28}>
            <svg width="11" height="4" aria-hidden="true">
              <rect width="11" height="4" fill="#f2f4f5" />
            </svg>
          </WinButton>
          <WinButton $w={26}>
            <svg width="11" height="11" viewBox="0 0 11 11" aria-hidden="true">
              <path d="M3 1 H10 V8 H8 V3 H3 Z M1 4 H7 V10 H1 Z M3 6 V8 H5 V6 Z" fill="#e8ecef" fillRule="evenodd" />
            </svg>
          </WinButton>
          <WinButton $w={48} $close>
            <svg width="12" height="11" viewBox="0 0 12 11" aria-hidden="true">
              <path d="M1 1 L11 10 M11 1 L1 10" stroke="#fff" strokeWidth="2.6" />
            </svg>
          </WinButton>
        </WindowButtons>
      </TitleBar>

      <MenuBar>
        <DocIcon>
          <CadDoc />
        </DocIcon>
        <MenuList>
          {MENU.map((m) => (
            <MenuItem key={m}>{m}</MenuItem>
          ))}
        </MenuList>
        <MdiButtons>
          <MdiButton>
            <svg width="9" height="9" aria-hidden="true">
              <rect y="7" width="7" height="2" fill="#78828e" />
            </svg>
          </MdiButton>
          <MdiButton>
            <svg width="9" height="9" viewBox="0 0 9 9" aria-hidden="true">
              <path d="M2.5 2.5 V.5 H8.5 V5.5 H6.5 M.5 3.5 H6.5 V8.5 H.5 Z" fill="none" stroke="#78828e" />
            </svg>
          </MdiButton>
          <MdiButton>
            <svg width="9" height="9" viewBox="0 0 9 9" aria-hidden="true">
              <path d="M1 1 L8 8 M8 1 L1 8" stroke="#78828e" strokeWidth="2" />
            </svg>
          </MdiButton>
        </MdiButtons>
      </MenuBar>

      <ToolRow>
        <Toolbar $w={651}>
          <Grip $w={10} />
          <IconCells names={["new", "open", "save"]} />
          <Sep />
          <IconCells names={["plot", "preview", "publish", "dwf"]} />
          <Sep />
          <IconCells names={["cut", "copy", "paste", "brush", "match"]} />
          <Sep />
          <IconCells names={["undo"]} />
          {DROP}
          <IconCells names={["redo"]} />
          {DROP_OFF}
          <Sep />
          <IconCells names={["pan", "zoomrt", "zoomwin", "zoomprev"]} />
          <Sep />
          <IconCells names={["props", "dc", "palette", "sheet", "markup", "calc"]} />
          <Sep />
          <IconCells names={["help"]} />
        </Toolbar>
        <Toolbar $w={398}>
          <Grip />
          <IconCells names={["textstyle"]} />
          <Combo $w={98} $ml={2}>
            <ComboLabel>Standard</ComboLabel>
          </Combo>
          <Sep />
          <IconCells names={["dimstyle"]} />
          <Combo $w={98} $ml={1}>
            <ComboLabel $ls={-0.6}>ISO-25</ComboLabel>
          </Combo>
          <Sep />
          <IconCells names={["tablestyle"]} />
          <Combo $w={100}>
            <ComboLabel>Standard</ComboLabel>
          </Combo>
        </Toolbar>
        <Toolbar $w={211}>
          <Grip />
          <IconCells names={["draworder"]} />
          <Sep />
          <IconCells names={["ddedit", "pedit", "splinedit"]} />
          <Sep />
          <IconCells names={["attdef", "attedit", "attext", "battman"]} />
        </Toolbar>
      </ToolRow>

      <ToolRow>
        <Toolbar $w={235}>
          <Grip $w={10} />
          <Combo $w={173} $ml={2}>
            <ComboLabel $ml={4} $ls={-0.55}>
              Классический AutoCAD
            </ComboLabel>
          </Combo>
          <Cell $ml={1}>
            <Icon name="gear" />
          </Cell>
          <IconCells names={["lockhouse"]} />
        </Toolbar>
        <Toolbar $w={385}>
          <Grip />
          <IconCells names={["layers"]} />
          <Combo $w={298} $ml={2} $gap={0}>
            {["bulb", "sun", "freeze", "lock"].map((n) => (
              <FlexIcon key={n}>
                <Icon name={n} />
              </FlexIcon>
            ))}
            <LayerSwatch />
            <ComboLabel>0</ComboLabel>
          </Combo>
          <Cell $ml={1}>
            <Icon name="layermatch" />
          </Cell>
          <IconCells names={["layerprev"]} />
        </Toolbar>
        <Toolbar $w={589}>
          <Grip />
          <Combo $w={148} $ml={2}>
            <Swatch />
            <ComboLabel $ls={-0.6}>Послою</ComboLabel>
          </Combo>
          <Sep />
          <Combo $w={162}>
            <LineSample $w={60} />
            <ComboLabel $ls={-0.6}>Послою</ComboLabel>
          </Combo>
          <Sep />
          <Combo $w={123}>
            <LineSample $w={35} />
            <ComboLabel $ls={-0.6}>Послою</ComboLabel>
          </Combo>
          <Sep />
          <Combo $w={120} $ml={1} $off>
            <ComboLabel $ml={5} $ls={-0.5}>
              Поцвету
            </ComboLabel>
          </Combo>
        </Toolbar>
        <Toolbar $w={85}>
          <Grip />
          <IconCells names={["annoD", "annoA", "annoT"]} />
        </Toolbar>
      </ToolRow>

      <Workspace>
        <SharedDefs />
        <Dock $w={53} $pl={0}>
          <ToolColumn $w={25}>
            <VGrip />
            <ColumnCells
              names={["line", "xline", "pline", "polygon", "rect", "arc", "circle", "cloud", "spline", "ellipse", "ellarc", "insert", "block", "point", "hatch", "gradient", "region", "table", "mtext"]}
            />
          </ToolColumn>
          <ToolColumn $w={26} $edge $pb={5}>
            <VGrip />
            <ColumnCells
              names={["erase", "copyobj", "mirror", "offset", "array", "move", "rotate", "scale", "stretch", "trim", "extend", "breakat", "breakobj", "join", "chamfer", "fillet", "explode"]}
            />
          </ToolColumn>
        </Dock>

        <Center>
          <Drawing />
          <TabBar>
            <TabNav>
              {NAV.map((d) => (
                <TabNavCell key={d}>
                  <svg width="11" height="10" viewBox="0 0 11 10" aria-hidden="true">
                    <path d={d} fill="#111" stroke="#111" />
                  </svg>
                </TabNavCell>
              ))}
            </TabNav>
            <Tab $w={53} $on>
              <TabShape on />
              <span>Модель</span>
            </Tab>
            <Tab $w={44}>
              <TabShape />
              <span>Лист1</span>
            </Tab>
            <Tab $w={45}>
              <TabShape />
              <span>Лист2</span>
            </Tab>
          </TabBar>
        </Center>

        <Dock $w={54} $pl={3}>
          <ToolColumn $w={25}>
            <VGrip />
            <ColumnCells names={["dtext", "mtextI", "ddeditA", "spell", "astyle", "scaletext", "justify", "convert"]} />
            <VBreak $h={19} $grip />
            <ColumnCells names={["tracking", "from"]} />
            <VBreak $h={5} />
            <ColumnCells names={["endpoint", "midpoint", "intersect", "apparent", "extension"]} />
            <VBreak $h={6} />
            <ColumnCells names={["center", "quadrant", "tangent"]} />
            <VBreak $h={6} />
            <ColumnCells names={["perp", "parallel", "snapinsert", "node"]} />
            <VBreak $h={6} />
            <ColumnCells names={["nearest", "none"]} />
            <VBreak $h={6} />
          </ToolColumn>
          <ToolColumn $w={26} $edge $pb={6}>
            <VGrip />
            <ColumnCells names={["dimlinear", "dimaligned", "dimarc", "dimord"]} />
            <VBreak $h={5} />
            <ColumnCells names={["dimradius", "dimjog", "dimdia", "dimang"]} />
            <VBreak $h={6} />
            <ColumnCells names={["qdim", "dimbase", "dimcont"]} />
            <VBreak $h={5} />
            <ColumnCells names={["leader", "tolerance", "centermark"]} />
            <VBreak $h={8} />
            <ColumnCells names={["dimedit", "dimtedit", "dimupdate"]} />
            <VBreak $h={5} />
            <ColumnCells names={["dimbrush"]} />
          </ToolColumn>
        </Dock>
      </Workspace>

      <CommandPanel>
        <CommandGrip />
        <CommandBody>
          <HistoryRow>
            <CommandText $pb={5}>Выберите объекты или [вЫбрать внутреннюю точку/удалить Контуры]:</CommandText>
            <VScroll>
              <TriangleUp />
              <TriangleDown />
            </VScroll>
          </HistoryRow>
          <InputRow>
            <CommandText $pt={2}>Команда:</CommandText>
            <HScroll>
              <TriangleLeft />
              <Thumb />
              <TriangleRight />
            </HScroll>
          </InputRow>
        </CommandBody>
      </CommandPanel>

      <StatusBar>
        <Coords>3.7977E+11, -2.5772E+10, 0.0000</Coords>
        {STATUS.map(([label, w, on]) => (
          <StatusButton key={label} $w={w} $on={on}>
            {label}
          </StatusButton>
        ))}
        <Tray>
          <TrayIcons>
            <Icon name="warn" />
            <Icon name="padlock" />
          </TrayIcons>
          <TrayArrow />
          <CleanScreen />
        </Tray>
      </StatusBar>
    </Frame>
  );
}
